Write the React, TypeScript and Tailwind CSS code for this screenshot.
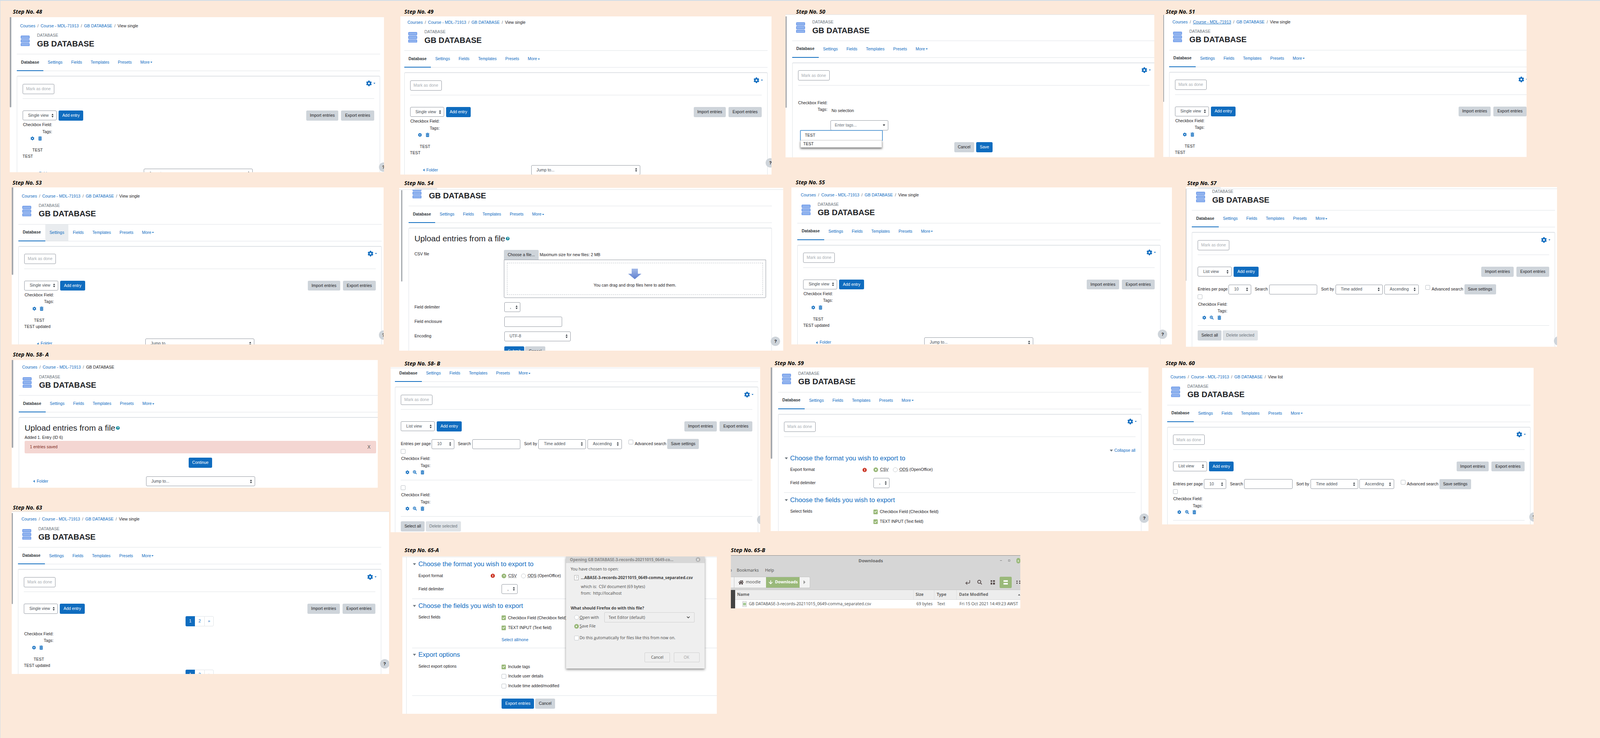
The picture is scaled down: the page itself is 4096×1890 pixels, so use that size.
import React from 'react';
import { FaCog, FaTrashAlt, FaSearchPlus, FaQuestionCircle, FaExclamationCircle, FaHome, FaSearch, FaCheck } from 'react-icons/fa';
import { ChevronDown, ArrowDown, CornerDownLeft } from 'lucide-react';

const LINK = 'text-[#0f6cbf]';

function Caret({ className }: { className: string }) {
  return (
    <svg viewBox="0 0 8 5" className={className}>
      <path d="M0 0h8L4 5z" fill="currentColor" />
    </svg>
  );
}

function DbIcon() {
  return (
    <svg viewBox="0 0 23 27" className="w-[23px] h-[27px] shrink-0">
      {[0, 9.5, 19].map((y) => (
        <g key={y}>
          <rect x="0.5" y={y + 0.5} width="22" height="7.5" rx="1.6" fill="#7fa6ee" stroke="#6a97e6" />
          <rect x="2" y={y + 2.5} width="19" height="3.5" fill="#94b6ee" />
        </g>
      ))}
    </svg>
  );
}

function Updown() {
  return (
    <svg viewBox="0 0 5 10" className="w-[5px] h-[10px] shrink-0 text-[#343a40]">
      <path d="M2.5 0L5 4H0zM2.5 10L0 6h5z" fill="currentColor" />
    </svg>
  );
}

function Select({ w, label, dark }: { w: string; label: string; dark?: boolean }) {
  return (
    <div className={`${w} h-[25.2px] shrink-0 border border-[#8f959e] rounded-[3px] bg-white flex items-center justify-between pl-[13px] pr-[7px] ${dark ? 'text-[#1d2125]' : 'text-[#495057]'}`}>
      <span>{label}</span>
      <Updown />
    </div>
  );
}

function Btn({ w, children, primary, faded, className = '' }: { w: string; children: React.ReactNode; primary?: boolean; faded?: boolean; className?: string }) {
  const tone = primary ? 'bg-[#0f6cbf] text-white' : faded ? 'bg-[#dfe3e7] text-[#6a737b]' : 'bg-[#ced4da] text-[#1d2125]';
  return <div className={`${w} h-[25.6px] shrink-0 rounded-[3px] flex items-center justify-center ${tone} ${className}`}>{children}</div>;
}

function Box() {
  return <div className="w-[12px] h-[12px] shrink-0 rounded-[2px] border border-[#b9bec4] bg-white" />;
}

function Checked({ children }: { children: React.ReactNode }) {
  return (
    <div className="flex items-center h-[18px]">
      <div className="w-[11.5px] h-[12px] rounded-[1.5px] bg-[#9ab97a] text-white flex items-center justify-center mr-[5px]">
        <FaCheck className="w-[7px] h-[7px]" />
      </div>
      {children}
    </div>
  );
}

function Unchecked({ children }: { children: React.ReactNode }) {
  return (
    <div className="flex items-center h-[18px]">
      <div className="mr-[5px]"><Box /></div>
      {children}
    </div>
  );
}

function Radio({ on }: { on?: boolean }) {
  return on ? (
    <div className="w-[12px] h-[12px] rounded-full bg-[#9ab97a] flex items-center justify-center shrink-0">
      <div className="w-[3.5px] h-[3.5px] rounded-full bg-white" />
    </div>
  ) : (
    <div className="w-[12px] h-[12px] rounded-full border border-[#c4c8cc] bg-white shrink-0" />
  );
}

function Page({ crumbs, current, ul, hover, className, children }: { crumbs: string[]; current?: string; ul?: boolean; hover?: boolean; className: string; children: React.ReactNode }) {
  return (
    <div className={`flex flex-col w-[930px] shrink-0 ${className}`}>
      <div className="h-[31.6px] pt-[13.6px] pl-[8.7px] flex leading-[18px] whitespace-nowrap">
        {crumbs.map((c, i) => (
          <React.Fragment key={c}>
            {i > 0 && <span className="mx-[5.4px] text-[#6a737b]">/</span>}
            <span className={`${LINK} ${ul && i === 1 ? 'underline' : ''}`}>{c}</span>
          </React.Fragment>
        ))}
        {current && (
          <>
            <span className="mx-[5.4px] text-[#6a737b]">/</span>
            <span className="text-[#1d2125]">{current}</span>
          </>
        )}
      </div>
      <div className="h-[63px] border-b border-[#dee2e6] flex">
        <div className="ml-[10.4px] mt-[15.4px]"><DbIcon /></div>
        <div className="ml-[18.6px] flex flex-col">
          <div className="mt-[8.4px] h-[14px] leading-[14px] text-[#6a737b]">DATABASE</div>
          <div className="mt-[1.4px] h-[24px] leading-[24px] text-[20.4px] font-bold text-[#1d2125]">GB DATABASE</div>
        </div>
      </div>
      <div className="h-[43px] border-b border-[#dee2e6] flex">
        <div className="px-[11.05px] flex items-center font-bold text-[#343a40] border-b-2 border-[#0f6cbf] h-[43px]">Database</div>
        <div className={`px-[11.05px] flex items-center ${LINK} ${hover ? 'bg-[#e9ecef]' : ''}`}>Settings</div>
        {['Fields', 'Templates', 'Presets'].map((t) => (
          <div key={t} className={`px-[11.05px] flex items-center ${LINK}`}>{t}</div>
        ))}
        <div className={`px-[11.05px] flex items-center ${LINK}`}>More<Caret className="w-[5px] h-[3px] ml-[2px]" /></div>
      </div>
      <div className="mt-[12px] min-h-[700px] border border-t-2 border-[#dee2e6] rounded-[3px] px-[14px] flex flex-col">{children}</div>
    </div>
  );
}

function ActivityHead() {
  return (
    <div className="flex justify-between items-start h-[57px] border-b border-[#dee2e6]">
      <div className="mt-[18.7px] w-[81px] h-[26px] border border-[#8f959e] rounded-[3px] flex items-center justify-center text-[#a9aeb3]">Mark as done</div>
      <div className={`flex items-center mt-[10.5px] mr-[-3px] ${LINK}`}>
        <FaCog className="w-[15px] h-[15px]" />
        <Caret className="w-[5px] h-[3px] ml-[4px]" />
      </div>
    </div>
  );
}

function Toolbar({ view }: { view: string }) {
  return (
    <div className="mt-[30px] flex justify-between">
      <div className="flex gap-[5.2px]">
        <Select w="w-[87px]" label={view} />
        <Btn w="w-[63.5px]" primary>Add entry</Btn>
      </div>
      <div className="flex gap-[7px]">
        <Btn w="w-[82.7px]">Import entries</Btn>
        <Btn w="w-[84.4px]">Export entries</Btn>
      </div>
    </div>
  );
}

function FieldLabels({ className = '' }: { className?: string }) {
  return (
    <div className={`flex flex-col items-start ${className}`}>
      <div className="w-[75.7px] h-[17.4px] leading-[17.4px] text-right whitespace-nowrap">Checkbox Field:</div>
      <div className="w-[75.7px] h-[17.4px] leading-[17.4px] text-right">Tags:</div>
    </div>
  );
}

function SingleEntry({ second }: { second: string }) {
  return (
    <>
      <FieldLabels className="mt-[2.7px]" />
      <div className={`flex items-center h-[17.4px] pl-[20.5px] gap-[9.5px] ${LINK}`}>
        <FaCog className="w-[10px] h-[11px]" />
        <FaTrashAlt className="w-[9px] h-[11px]" />
      </div>
      <div className="mt-[14px] h-[15.7px] leading-[15.7px] pl-[25px]">TEST</div>
      <div className="h-[15.7px] leading-[15.7px]">{second}</div>
    </>
  );
}

function FolderJump({ className = 'mt-[23px]', indent = 'ml-[33px]' }: { className?: string; indent?: string }) {
  return (
    <div className={`flex items-center ${className}`}>
      <div className={`w-[277px] flex items-center ${indent} ${LINK}`}>
        <svg viewBox="0 0 4 8" className="w-[4px] h-[7px] mr-[5px]"><path d="M4 0v8L0 4z" fill="currentColor" /></svg>
        Folder
      </div>
      <Select w="w-[279px]" label="Jump to..." />
    </div>
  );
}

function EntriesBar() {
  return (
    <div className="mt-[20px] flex items-center h-[25.2px] whitespace-nowrap">
      <div className="w-[79.2px]">Entries per page</div>
      <Select w="w-[57.4px]" label="10" />
      <div className="w-[36.5px] ml-[9.6px]">Search</div>
      <div className="w-[123.5px] h-[25.2px] border border-[#8f959e] rounded-[3px]" />
      <div className="w-[36.6px] ml-[9.6px]">Sort by</div>
      <Select w="w-[121.8px]" label="Time added" />
      <div className="ml-[3.4px]"><Select w="w-[88.7px]" label="Ascending" /></div>
      <div className="ml-[16.7px] mb-[10px]"><Box /></div>
      <div className="w-[83.4px] ml-[4px]">Advanced search</div>
      <Btn w="w-[81px]">Save settings</Btn>
    </div>
  );
}

function ListEntry({ first }: { first?: boolean }) {
  return (
    <>
      <div className={first ? 'mt-[0.2px]' : 'mt-[12.5px]'}><Box /></div>
      <FieldLabels className="mt-[4.5px]" />
      <div className={`flex items-center h-[16px] pl-[11.6px] gap-[9.6px] ${LINK}`}>
        <FaCog className="w-[10px] h-[11px]" />
        <FaSearchPlus className="w-[10px] h-[11px]" />
        <FaTrashAlt className="w-[9px] h-[11px]" />
      </div>
      <div className="mt-[12px] border-b border-[#dee2e6]" />
    </>
  );
}

function SelectBar() {
  return (
    <div className="mt-[12px] flex gap-[2.6px]">
      <Btn w="w-[61px]">Select all</Btn>
      <Btn w="w-[90.5px]" faded>Delete selected</Btn>
    </div>
  );
}

function Pager({ className }: { className: string }) {
  return (
    <div className={`flex ml-[414px] h-[26px] ${className}`}>
      <div className="w-[24px] bg-[#0f6cbf] text-white flex items-center justify-center rounded-l-[3px]">1</div>
      <div className={`w-[24px] border-y border-[#dee2e6] flex items-center justify-center ${LINK}`}>2</div>
      <div className={`w-[24px] border border-[#dee2e6] flex items-center justify-center rounded-r-[3px] ${LINK}`}>»</div>
    </div>
  );
}

function UploadTitle() {
  return (
    <div className="mt-[13.6px] h-[24px] leading-[24px] text-[20.9px] text-[#1d2125] flex items-center whitespace-nowrap">
      Upload entries from a file
      <FaQuestionCircle className="w-[9.5px] h-[10px] ml-[2px] text-[#008196]" />
    </div>
  );
}

function UploadForm() {
  return (
    <>
      <UploadTitle />
      <div className="mt-[17.2px] flex">
        <div className="w-[229.7px] mt-[3.5px]">CSV file</div>
        <div className="flex flex-col">
          <div className="flex items-center">
            <div className="w-[88.7px] h-[25.2px] bg-[#ced4da] rounded-t-[3px] flex items-center justify-center">Choose a file...</div>
            <div className="ml-[2.6px]">Maximum size for new files: 2 MB</div>
          </div>
          <div className="w-[670.8px] h-[97.4px] border-[1.5px] border-[#8f959e] rounded-b-[3px] p-[7px]">
            <div className="h-full border border-dashed border-[#b9bec4] flex flex-col items-center">
              <svg viewBox="0 0 34 27" className="w-[34px] h-[27px] mt-[14px]">
                <defs>
                  <linearGradient id="upl" x1="0" y1="0" x2="0" y2="1">
                    <stop offset="0" stopColor="#a3b9e8" />
                    <stop offset="1" stopColor="#5f80cf" />
                  </linearGradient>
                </defs>
                <path d="M9 0h16v13h9L17 27 0 13h9z" fill="url(#upl)" />
              </svg>
              <div className="mt-[8px]">You can drag and drop files here to add them.</div>
            </div>
          </div>
        </div>
      </div>
      <div className="mt-[11.3px] flex items-center">
        <div className="w-[229.7px]">Field delimiter</div>
        <div className="w-[41px] h-[25.3px] border border-[#8f959e] rounded-[3px] flex items-center justify-between pl-[14px] pr-[6px]">,<Updown /></div>
      </div>
      <div className="mt-[12px] flex items-center">
        <div className="w-[229.7px]">Field enclosure</div>
        <div className="w-[148.8px] h-[25.6px] border border-[#8f959e] rounded-[3px]" />
      </div>
      <div className="mt-[11.8px] flex items-center">
        <div className="w-[229.7px]">Encoding</div>
        <Select w="w-[170.5px]" label="UTF-8" />
      </div>
      <div className="mt-[13px] flex ml-[229.7px] gap-[2.6px]">
        <Btn w="w-[51.3px]" primary>Submit</Btn>
        <Btn w="w-[51.3px]">Cancel</Btn>
      </div>
    </>
  );
}

function SavedResult() {
  return (
    <>
      <UploadTitle />
      <div className="mt-[4px] h-[18px] leading-[18px]">Added 1. Entry (ID 6)</div>
      <div className="mt-[-1px] w-[900.5px] h-[32.2px] bg-[#f4d6d2] rounded-[3px] flex items-center justify-between pl-[13.5px] pr-[15px] text-[#7d2a1c]">
        <span>1 entries saved</span>
        <span className="text-[#555] text-[12px]">X</span>
      </div>
      <div className="mt-[11.3px] ml-[420px]"><Btn w="w-[60px]" primary>Continue</Btn></div>
      <FolderJump className="mt-[22px]" indent="ml-[22px] mr-[11.6px]" />
    </>
  );
}

function SectionTitle({ children }: { children: React.ReactNode }) {
  return (
    <div className={`h-[22px] leading-[22px] text-[16.7px] ${LINK} flex items-center whitespace-nowrap`}>
      <Caret className="w-[8px] h-[6px] ml-[2.5px] mr-[5.6px] text-[#6a737b]" />
      {children}
    </div>
  );
}

function FormLabel({ children }: { children: React.ReactNode }) {
  return <div className="w-[212.7px] ml-[16.5px] shrink-0 whitespace-nowrap">{children}</div>;
}

function ExportForm() {
  return (
    <>
      <div className={`mt-[26px] h-[18px] flex items-center justify-end ${LINK}`}>
        <Caret className="w-[8px] h-[6px] mr-[4px] text-[#6a737b]" />
        Collapse all
      </div>
      <SectionTitle>Choose the format you wish to export to</SectionTitle>
      <div className="mt-[9.6px] h-[18px] flex items-center whitespace-nowrap">
        <div className="w-[185px] ml-[16.5px] shrink-0">Export format</div>
        <FaExclamationCircle className="w-[11px] h-[11px] text-[#ca3120] mr-[17px] shrink-0" />
        <Radio on />
        <span className="ml-[5px] underline decoration-dotted">CSV</span>
        <div className="ml-[11px]"><Radio /></div>
        <span className="ml-[5px]"><span className="underline decoration-dotted">ODS</span> (OpenOffice)</span>
      </div>
      <div className="mt-[12.2px] flex items-center">
        <FormLabel>Field delimiter</FormLabel>
        <div className="w-[41px] h-[25.2px] border border-[#8f959e] rounded-[3px] flex items-center justify-between pl-[14px] pr-[6px]">,<Updown /></div>
      </div>
      <div className="mt-[11.9px] border-b border-[#dee2e6]" />
      <div className="mt-[7.1px]"><SectionTitle>Choose the fields you wish to export</SectionTitle></div>
      <div className="mt-[10.4px] flex">
        <FormLabel>Select fields</FormLabel>
        <Checked>Checkbox Field (Checkbox field)</Checked>
      </div>
      <div className="mt-[7.3px] ml-[229.2px]"><Checked>TEXT INPUT (Text field)</Checked></div>
      <div className={`mt-[13.3px] ml-[229.2px] h-[18px] leading-[18px] ${LINK}`}>Select all/none</div>
      <div className="mt-[11px] border-b border-[#dee2e6]" />
      <div className="mt-[6.4px]"><SectionTitle>Export options</SectionTitle></div>
      <div className="mt-[10.4px] flex">
        <FormLabel>Select export options</FormLabel>
        <Checked>Include tags</Checked>
      </div>
      <div className="mt-[6px] ml-[229.2px]"><Unchecked>Include user details</Unchecked></div>
      <div className="mt-[7.1px] ml-[229.2px]"><Unchecked>Include time added/modified</Unchecked></div>
      <div className="mt-[14.9px] border-b border-[#dee2e6]" />
      <div className="mt-[7.3px] ml-[229.2px] flex gap-[2.6px]">
        <Btn w="w-[83.5px]" primary>Export entries</Btn>
        <Btn w="w-[51.3px]">Cancel</Btn>
      </div>
    </>
  );
}

function EditEntry() {
  return (
    <>
      <div className="mt-[36.5px] w-[75.7px] h-[18px] leading-[18px] text-right whitespace-nowrap">Checkbox Field:</div>
      <div className="mt-[-1px] flex">
        <div className="w-[75.7px] h-[18px] leading-[18px] text-right">Tags:</div>
        <div className="ml-[10.5px] mt-[3px] h-[18px] leading-[18px]">No selection</div>
      </div>
      <div className="relative mt-[15px] ml-[83.5px] w-[148px] h-[25.3px] border border-[#8f959e] rounded-[3px] flex items-center justify-between pl-[10px] pr-[7px] text-[#6a737b]">
        Enter tags...
        <Caret className="w-[6px] h-[7px] text-[#1d2125]" />
        <div className="absolute left-[-78.6px] top-[23.5px] w-[211.4px] h-[28px] bg-white border-[2px] border-[#5e9ed6] rounded-[2px] flex items-center pl-[10px] text-[#1d2125]">TEST</div>
        <div className="absolute left-[-77.7px] top-[50px] w-[209px] h-[19.2px] bg-white border border-[#d0d0d0] shadow-[0_3px_5px_rgba(0,0,0,0.55)] flex items-center pl-[6px] text-[#1d2125]">TEST</div>
      </div>
      <div className="mt-[30.5px] ml-[400px] flex gap-[5px]">
        <Btn w="w-[51.3px]">Cancel</Btn>
        <Btn w="w-[42.6px]" primary>Save</Btn>
      </div>
    </>
  );
}

function Label({ className, children }: { className: string; children: React.ReactNode }) {
  return (
    <div className={`absolute h-[20px] leading-[20px] text-[14px] font-bold italic text-black font-['Open_Sans',sans-serif] whitespace-nowrap ${className}`}>
      {children}
    </div>
  );
}

function Panel({ className, children }: { className: string; children: React.ReactNode }) {
  return <div className={`absolute overflow-hidden bg-white flex items-start ${className}`}>{children}</div>;
}

function Bar({ className }: { className: string }) {
  return <div className={`absolute bg-[#a5a9ae] rounded-b-[2px] ${className}`} />;
}

function Help({ className }: { className: string }) {
  return (
    <div className={`absolute w-[24px] h-[24px] rounded-full bg-[#ced4da] flex items-center justify-center font-bold text-[11px] text-[#1d2125] ${className}`}>?</div>
  );
}

function TopStrip({ bar, className }: { bar?: string; className: string }) {
  return (
    <div className={`absolute left-0 right-0 top-0 bg-white border-b border-[#dee2e6] ${className}`}>
      {bar && <div className={`h-full bg-[#e9ecef] ${bar}`} />}
    </div>
  );
}

const FULL = ['Courses', 'Course - MDL-71913', 'GB DATABASE'];

function FirefoxDialog() {
  return (
    <div className="absolute left-[418.5px] top-0 w-[355px] h-[287px] bg-[#efefef] shadow-[0_3px_6px_rgba(0,0,0,0.45)] flex flex-col font-['Noto_Sans',sans-serif] text-[10.2px] text-[#555] whitespace-nowrap">
      <div className="h-[16.5px] bg-[#d7d7d7] flex items-center justify-between pl-[10.4px] pr-[11px] font-bold text-[#8a8a8a]">
        <span>Opening GB DATABASE-3-records-20211015_0649-co...</span>
        <span className="w-[12px] h-[12px] rounded-full bg-[#b4b4b4] text-white text-[8px] flex items-center justify-center">x</span>
      </div>
      <div className="ml-[12.2px] mt-[8px] h-[14px] leading-[14px]">You have chosen to open:</div>
      <div className="mt-[9px] flex items-center h-[14px] ml-[21.7px]">
        <div className="w-[11px] h-[13px] border border-[#aaa] bg-white text-[8px] leading-[11px] text-center text-[#888] mr-[5.6px]">?</div>
        <span className="font-bold text-[#444] text-[10.3px]">...ABASE-3-records-20211015_0649-comma_separated.csv</span>
      </div>
      <div className="ml-[38.3px] mt-[8px] h-[14px] leading-[14px] flex"><span className="w-[46px]">which is:</span><span>CSV document (69 bytes)</span></div>
      <div className="ml-[38.3px] mt-[3.4px] h-[14px] leading-[14px] flex"><span className="w-[31.3px]">from:</span><span>http://localhost</span></div>
      <div className="ml-[12.2px] mt-[24px] h-[14px] leading-[14px] font-bold text-[#444]">What should Firefox do with this file?</div>
      <div className="mt-[4.4px] flex items-center h-[26px] ml-[21px]">
        <Radio />
        <span className="ml-[2px] w-[63.3px]"><u>O</u>pen with</span>
        <div className="w-[231.4px] h-[26px] border border-[#cfcfcf] rounded-[2px] flex items-center justify-between pl-[10px] pr-[9px]">
          Text Editor (default)
          <ChevronDown className="w-[12px] h-[12px] text-[#333]" strokeWidth={3} />
        </div>
      </div>
      <div className="mt-[2.8px] flex items-center h-[14px] ml-[21px]">
        <Radio on />
        <span className="ml-[2px]"><u>S</u>ave File</span>
      </div>
      <div className="mt-[15.6px] flex items-center h-[14px] ml-[21px]">
        <div className="w-[12px] h-[12px] rounded-[2px] border border-[#c4c8cc] bg-white" />
        <span className="ml-[2px]">Do this <u>a</u>utomatically for files like this from now on.</span>
      </div>
      <div className="mt-[30.4px] flex justify-end pr-[13.2px] gap-[9.8px]">
        <div className="w-[64.4px] h-[25.3px] border border-[#cfcfcf] rounded-[2px] flex items-center justify-center">Cancel</div>
        <div className="w-[66px] h-[25.3px] border border-[#cfcfcf] rounded-[2px] flex items-center justify-center text-[#aaa]">OK</div>
      </div>
    </div>
  );
}

function FileManager() {
  return (
    <div className="w-full h-full flex flex-col font-['Noto_Sans',sans-serif] text-[10.6px] text-[#555] border-t border-[#8a8a8a] whitespace-nowrap">
      <div className="bg-[#d6d6d6] h-[87px] flex flex-col">
        <div className="h-[26px] flex items-center relative">
          <div className="w-full text-center font-bold text-[#666] text-[11.4px] pr-[24px]">Downloads</div>
          <div className="absolute right-[5px] flex items-center gap-[16px]">
            <span className="w-[5px] h-[1.5px] bg-[#777]" />
            <span className="w-[5px] h-[5px] border border-[#888]" />
            <span className="w-[10px] h-[14px] rounded-full bg-[#9ab97a] mr-[-5px] text-white text-[8px] flex items-center justify-center">x</span>
          </div>
        </div>
        <div className="mt-[3px] h-[18px] flex items-center">
          <span className="w-[3px] overflow-hidden flex justify-end">o</span>
          <span className="ml-[12.5px]">Bookmarks</span>
          <span className="ml-[16px]">Help</span>
        </div>
        <div className="mt-[7px] h-[29px] flex items-center">
          <div className="flex h-[29px] border-y border-r border-[#c4c4c4] rounded-r-[3px] bg-[#f3f3f3]">
            <div className="w-[9.6px] border-r border-[#c4c4c4]" />
            <div className="w-[81px] flex items-center pl-[10px] gap-[5px] text-[#555]"><FaHome className="w-[14px] h-[13px] text-[#5a4f4f]" />moodle</div>
            <div className="w-[86px] bg-[#9ab97a] text-white font-bold flex items-center justify-center gap-[4px]"><ArrowDown className="w-[14px] h-[14px]" strokeWidth={3} />Downloads</div>
            <div className="w-[26px] flex items-center pl-[10px] text-[#999]"><svg viewBox="0 0 5 10" className="w-[5px] h-[10px]"><path d="M0 0l5 5-5 5z" fill="currentColor" /></svg></div>
          </div>
          <div className="ml-auto flex items-center text-[#5a4f4f]">
            <CornerDownLeft className="w-[15px] h-[15px] mr-[17px]" strokeWidth={2.6} />
            <FaSearch className="w-[12px] h-[12px] mr-[22px]" />
            <div className="grid grid-cols-2 gap-[2px] w-[11px] mr-[12px]">
              {[0, 1, 2, 3].map((i) => <span key={i} className="w-[4.5px] h-[4.5px] bg-[#5a4f4f]" />)}
            </div>
            <div className="w-[31px] h-[29px] bg-[#9ab97a] rounded-[3px] flex flex-col justify-center gap-[3px] pl-[10px] mr-[12px]">
              <span className="w-[11px] h-[4px] bg-white" />
              <span className="w-[11px] h-[4px] bg-white" />
            </div>
            <div className="grid grid-cols-2 gap-[2px] w-[12px] mr-[-2px]">
              {[0, 1, 2, 3].map((i) => <span key={i} className="w-[3px] h-[3px] bg-[#5a4f4f]" />)}
            </div>
          </div>
        </div>
      </div>
      <div className="flex-1 flex border-t border-[#c4c4c4]">
        <div className="w-[11.3px] bg-[#444]" />
        <div className="flex-1 flex flex-col">
          <div className="h-[25px] bg-[#ededed] border-b border-[#d4d4d4] flex font-bold text-[#666]">
            <div className="w-[457px] flex items-center pl-[5px] border-r border-[#ddd]">Name</div>
            <div className="w-[53px] flex items-center pl-[5px] border-r border-[#ddd]">Size</div>
            <div className="w-[57.4px] flex items-center pl-[6px] border-r border-[#ddd]">Type</div>
            <div className="flex-1 flex items-center justify-between pl-[6px]">Date Modified<Caret className="w-[6px] h-[4px] rotate-180" /></div>
          </div>
          <div className="flex-1 bg-white flex items-center">
            <div className="w-[457px] flex items-center pl-[19px]">
              <svg viewBox="0 0 11 15" className="w-[10px] h-[14px] mr-[6px]">
                <rect x="0.5" y="0.5" width="10" height="14" fill="#fff" stroke="#aaa" />
                <rect x="2" y="4" width="7" height="7" fill="#6aa84f" />
                <path d="M2 6.3h7M2 8.6h7M4.3 4v7M6.6 4v7" stroke="#fff" strokeWidth="0.6" />
              </svg>
              GB DATABASE-3-records-20211015_0649-comma_separated.csv
            </div>
            <div className="w-[53px] pl-[7px]">69 bytes</div>
            <div className="w-[57.4px] pl-[7px]">Text</div>
            <div className="pl-[7px]">Fri 15 Oct 2021 14:49:23 AWST</div>
          </div>
        </div>
      </div>
    </div>
  );
}

export default function App() {
  return (
    <div className="relative w-[4096px] h-[1890px] overflow-hidden bg-[#fce9da] border-t-2 border-l border-[#cfdde9] font-['Liberation_Sans',Arial,sans-serif] text-[10.44px] text-[#1d2125]">
      <Label className="left-[32px] top-[18px]">Step No. 48</Label>
      <Panel className="left-[23.5px] top-[42.4px] w-[958px] h-[397px]">
        <Page crumbs={FULL} current="View single" className="ml-[18.3px]">
          <ActivityHead /><Toolbar view="Single view" /><SingleEntry second="TEST" /><FolderJump />
        </Page>
        <Bar className="left-0 top-0 w-[4.4px] h-[231px]" />
        <Help className="left-[945px] top-[371.7px]" />
      </Panel>

      <Label className="left-[1034px] top-[18px]">Step No. 49</Label>
      <Panel className="left-[1024px] top-[39.8px] w-[950px] h-[405.4px]">
        <Page crumbs={FULL} current="View single" className="ml-[9.6px] mt-[-6.4px]">
          <ActivityHead /><Toolbar view="Single view" /><SingleEntry second="TEST" /><FolderJump />
        </Page>
        <Help className="left-[935.4px] top-[363px]" />
      </Panel>

      <Label className="left-[2037px] top-[18px]">Step No. 50</Label>
      <Panel className="left-[2010px] top-[35.4px] w-[944px] h-[365.4px] border-t border-[#dee2e6]">
        <Page crumbs={FULL} current="Add entry" className="ml-[16.5px] mt-[-28.2px]">
          <ActivityHead /><EditEntry />
        </Page>
        <Bar className="left-0 top-[3.5px] w-[2.6px] h-[234px]" />
      </Panel>

      <Label className="left-[2983.5px] top-[18px]">Step No. 51</Label>
      <Panel className="left-[2977px] top-[36.3px] w-[930px] h-[363.7px]">
        <Page crumbs={FULL} current="View single" ul className="ml-[14.8px] mt-[-4.4px]">
          <ActivityHead /><Toolbar view="Single view" /><SingleEntry second="TEST" /><FolderJump />
        </Page>
        <Bar className="left-0 top-0 w-[1.7px] h-[223px]" />
      </Panel>

      <Label className="left-[31px] top-[455.5px]">Step No. 53</Label>
      <Panel className="left-[28.7px] top-[478px] w-[952.6px] h-[402px]">
        <Page crumbs={FULL} current="View single" hover className="ml-[17.4px]">
          <ActivityHead /><Toolbar view="Single view" /><SingleEntry second="TEST updated" /><FolderJump />
        </Page>
        <Bar className="left-0 top-0 w-[4px] h-[224px]" />
        <Help className="left-[940px] top-[366px]" />
      </Panel>

      <Label className="left-[1034px] top-[457px]">Step No. 54</Label>
      <Panel className="left-[1021.4px] top-[479px] w-[982.7px] h-[416.7px]">
        <Page crumbs={FULL} className="ml-[23.5px] mt-[-47.4px]"><UploadForm /></Page>
        <TopStrip className="h-[5px]" bar="ml-[39px] w-[58px]" />
        <Bar className="left-[4.4px] top-[6px] w-[3.5px] h-[234px]" />
        <Help className="left-[951px] top-[381px]" />
      </Panel>

      <Label className="left-[2036px] top-[455px]">Step No. 55</Label>
      <Panel className="left-[2025.4px] top-[478px] w-[973.5px] h-[402px]">
        <Page crumbs={FULL} current="View single" className="ml-[14.8px] mt-[-3px]">
          <ActivityHead /><Toolbar view="Single view" /><SingleEntry second="TEST updated" /><FolderJump />
        </Page>
        <Help className="left-[938px] top-[364px]" />
      </Panel>

      <Label className="left-[3038.6px] top-[457px]">Step No. 57</Label>
      <Panel className="left-[3035.4px] top-[476.5px] w-[950px] h-[409px]">
        <Page crumbs={FULL} current="View list" className="ml-[14.8px] mt-[-34px]">
          <ActivityHead /><Toolbar view="List view" /><EntriesBar /><ListEntry first /><SelectBar />
        </Page>
        <TopStrip className="h-[5px]" bar="ml-[30.5px] w-[58px]" />
        <Bar className="left-0 top-[5px] w-[1px] h-[235px]" />
        <Help className="left-[942px] top-[382px]" />
      </Panel>

      <Label className="left-[32px] top-[896px]">Step No. 58- A</Label>
      <Panel className="left-[28.7px] top-[920.2px] w-[937px] h-[327px]">
        <Page crumbs={['Courses', 'Course - MDL-71913']} current="GB DATABASE" className="ml-[18.3px] mt-[-3.5px]"><SavedResult /></Page>
        <Bar className="left-0 top-0 w-[4.4px] h-[225px]" />
      </Panel>

      <Label className="left-[1034.4px] top-[919px]">Step No. 58- B</Label>
      <Panel className="left-[998.8px] top-[937.6px] w-[946.6px] h-[423.3px]">
        <Page crumbs={FULL} current="View list" className="ml-[11.3px] mt-[-99.2px]">
          <ActivityHead /><Toolbar view="List view" /><EntriesBar /><ListEntry first /><ListEntry /><SelectBar />
        </Page>
        <TopStrip className="h-[3px]" />
        <Help className="left-[938px] top-[379px]" />
      </Panel>

      <Label className="left-[1982px] top-[918px]">Step No. 59</Label>
      <Panel className="left-[1972.3px] top-[939.3px] w-[966.6px] h-[418.5px]">
        <Page crumbs={FULL} current="Export entries" className="ml-[18.3px] mt-[-31.3px]">
          <ActivityHead /><ExportForm />
        </Page>
        <Bar className="left-0 top-0 w-[3.5px] h-[234px]" />
        <Help className="left-[944px] top-[374px]" />
      </Panel>

      <Label className="left-[2983px] top-[918px]">Step No. 60</Label>
      <Panel className="left-[2973.7px] top-[940.2px] w-[951.8px] h-[401px]">
        <Page crumbs={FULL} current="View list" className="ml-[13px] mt-[0.9px]">
          <ActivityHead /><Toolbar view="List view" /><EntriesBar /><ListEntry first />
        </Page>
        <Help className="left-[940px] top-[370px]" />
      </Panel>

      <Label className="left-[32px] top-[1288px]">Step No. 63</Label>
      <Panel className="left-[28.7px] top-[1307.8px] w-[966.6px] h-[416.3px] border-t border-[#dee2e6]">
        <Page crumbs={FULL} current="View single" className="ml-[16.5px] mt-[-3px]">
          <ActivityHead /><Toolbar view="Single view" />
          <Pager className="mt-[6px]" />
          <div className="mt-[8px]"><SingleEntry second="TEST updated" /></div>
          <Pager className="mt-[3px]" />
        </Page>
        <Bar className="left-0 top-[3px] w-[3px] h-[233px]" />
        <Help className="left-[943px] top-[377px]" />
      </Panel>

      <Label className="left-[1034.6px] top-[1396.6px]">Step No. 65-A</Label>
      <Panel className="left-[1029.2px] top-[1423px] w-[804.8px] h-[402.8px]">
        <Page crumbs={FULL} current="Export entries" className="ml-[9.6px] mt-[-243.6px]">
          <ActivityHead /><ExportForm />
        </Page>
        <TopStrip className="h-[1.5px]" />
        <FirefoxDialog />
      </Panel>

      <Label className="left-[1870px] top-[1396.5px]">Step No. 65-B</Label>
      <Panel className="left-[1869.6px] top-[1419.6px] w-[741.2px] h-[136.6px]">
        <FileManager />
      </Panel>
    </div>
  );
}
